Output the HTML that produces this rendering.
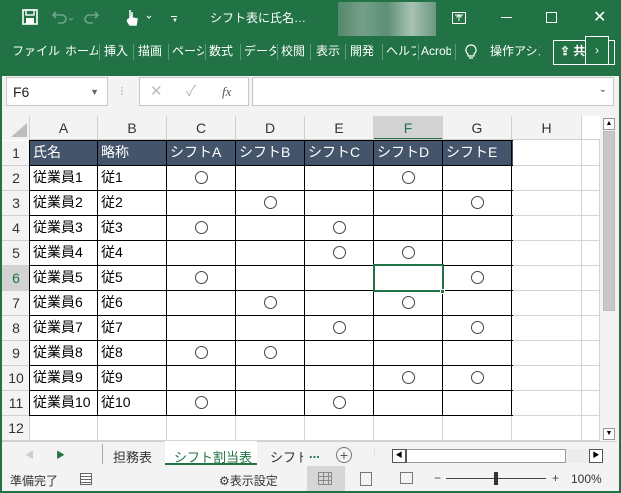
<!DOCTYPE html><html><head><meta charset="utf-8"><style>
*{margin:0;padding:0;box-sizing:border-box}
body{width:621px;height:493px;overflow:hidden;background:#217346;font-family:"Liberation Sans","Noto Sans CJK JP",sans-serif;position:relative}
.a{position:absolute}
.t{color:#fff;font-size:12px}
.tab{position:absolute;top:38px;height:26px;line-height:26px;color:#fff;font-size:12px;white-space:nowrap;overflow:hidden}
.sep{position:absolute;top:44px;width:1px;height:16px;background:#5c9a78}
#main{position:absolute;left:2px;top:76px;width:617px;height:415px;background:#f3f3f3}
.cell{position:absolute;font-size:14px;line-height:25px;color:#000;padding-left:3px;white-space:nowrap}
.ch{position:absolute;top:116px;height:24px;line-height:24px;text-align:center;font-size:14px;color:#333;border-right:1px solid #d0d0d0;background:#f3f3f3}
.rh{position:absolute;left:2px;width:28px;height:25px;line-height:25px;text-align:center;font-size:14px;color:#333;border-bottom:1px solid #d0d0d0}
.o{position:absolute;width:13px;height:13px;border:1px solid #444;border-radius:50%}
</style></head><body>
<svg class="a" style="left:22px;top:9px" width="16" height="16"><rect x="1" y="1" width="14" height="14" fill="none" stroke="#fff" stroke-width="1.6"/><rect x="4" y="1" width="8" height="5" fill="none" stroke="#fff" stroke-width="1.4"/><rect x="4" y="9" width="8" height="6" fill="#fff"/></svg>
<svg class="a" style="left:50px;top:9px" width="60" height="16"><path d="M3 6h9a4 4 0 0 1 0 8H8M6 3L3 6l3 3" fill="none" stroke="#6fa58a" stroke-width="1.6"/><path d="M19 9l2 2 2-2" stroke="#6fa58a" fill="none"/><path d="M48 6h-9a4 4 0 0 0 0 8h4M45 3l3 3-3 3" fill="none" stroke="#6fa58a" stroke-width="1.6"/></svg>
<svg class="a" style="left:126px;top:8px" width="32" height="18"><path d="M4 2v9M4 11c-2 0-3 1-2 3l2 3h6l1-6-5-1V4" fill="#fff" stroke="#fff" stroke-width="1.5"/><path d="M21 8l2 2 2-2" stroke="#fff" fill="none"/></svg>
<div class="a" style="left:171px;top:16px;width:6px;height:1px;background:#fff"></div><div class="a" style="left:172px;top:18px;font-size:6px;color:#fff">▼</div>
<div class="a t" style="left:210px;top:9px;font-size:12px">シフト表に氏名…</div>
<div class="a" style="left:338px;top:2px;width:98px;height:34px;background:linear-gradient(90deg,#5f8f76,#8aa998,#6c9782,#c9d6cf,#7fa08f);opacity:.8"></div>
<svg class="a" style="left:452px;top:12px" width="14" height="12"><rect x=".5" y=".5" width="13" height="11" fill="none" stroke="#fff"/><path d="M7 9V3M4.5 5.5L7 3l2.5 2.5M3 3h8" stroke="#fff" fill="none"/></svg>
<div class="a" style="left:501px;top:17px;width:11px;height:1px;background:#fff"></div>
<div class="a" style="left:546px;top:12px;width:11px;height:11px;border:1px solid #fff"></div>
<div class="a t" style="left:593px;top:7px;font-size:16px">✕</div>
<div class="tab" style="left:12px">ファイル</div>
<div class="tab" style="left:65px;width:33px">ホーム</div><div class="sep" style="left:99px"></div>
<div class="tab" style="left:104px">挿入</div><div class="sep" style="left:133px"></div>
<div class="tab" style="left:138px">描画</div><div class="sep" style="left:168px"></div>
<div class="tab" style="left:172px;width:32px">ページ</div><div class="sep" style="left:205px"></div>
<div class="tab" style="left:209px">数式</div><div class="sep" style="left:240px"></div>
<div class="tab" style="left:244px;width:32px">データ</div><div class="sep" style="left:277px"></div>
<div class="tab" style="left:281px">校閲</div><div class="sep" style="left:310px"></div>
<div class="tab" style="left:316px">表示</div><div class="sep" style="left:345px"></div>
<div class="tab" style="left:350px">開発</div><div class="sep" style="left:382px"></div>
<div class="tab" style="left:386px;width:30px">ヘルプ</div><div class="sep" style="left:418px"></div>
<div class="tab" style="left:421px;width:30px">Acrobat</div><div class="sep" style="left:455px"></div>
<svg class="a" style="left:465px;top:44px" width="12" height="16"><path d="M6 1a5 5 0 0 0-3 9v2h6v-2a5 5 0 0 0-3-9zM4 14h4" fill="none" stroke="#fff" stroke-width="1.2"/></svg>
<div class="tab" style="left:490px;width:50px">操作アシスト</div>
<div class="a" style="left:553px;top:40px;width:62px;height:25px;border:1px solid #fff"></div>
<div class="tab" style="left:560px;font-weight:bold">⇪ 共</div>
<div class="a" style="left:585px;top:36px;width:24px;height:29px;border:1px solid #fff;background:#217346;color:#fff;text-align:center;line-height:27px;font-size:12px">›</div>
<div id="main"></div>
<div class="a" style="left:6px;top:77px;width:102px;height:29px;background:#fff;border:1px solid #c6c6c6;font-size:14px;line-height:28px;padding-left:6px;color:#222">F6<span style="position:absolute;right:8px;font-size:9px;color:#666">▼</span></div>
<div class="a" style="left:120px;top:84px;color:#aaa;font-size:12px">⁝</div>
<div class="a" style="left:139px;top:77px;width:110px;height:29px;background:#fff;border:1px solid #c6c6c6;color:#bbb;font-size:15px;line-height:27px"><span style="position:absolute;left:10px">✕</span><span style="position:absolute;left:46px">✓</span><span style="position:absolute;left:82px;color:#555;font-style:italic;font-family:'Liberation Serif',serif;font-size:13px">fx</span></div>
<div class="a" style="left:252px;top:77px;width:362px;height:29px;background:#fff;border:1px solid #c6c6c6"><span style="position:absolute;right:6px;top:6px;font-size:10px;color:#555">⌄</span></div>
<div class="a" style="left:2px;top:116px;width:598px;height:325px;background:#fff"></div>
<div class="a" style="left:2px;top:116px;width:28px;height:24px;background:#f3f3f3;border-right:1px solid #d0d0d0"></div>
<svg class="a" style="left:8px;top:122px" width="20" height="16"><path d="M19 1V15H3Z" fill="#bdbdbd"/></svg>
<div id="g"></div>
<div class="a" style="left:600px;top:116px;width:17px;height:325px;background:#f3f3f3"></div>
<div class="a" style="left:603px;top:118px;width:12px;height:12px;border:1px solid #999;background:#fff;font-size:7px;text-align:center;line-height:10px">▲</div>
<div class="a" style="left:603px;top:131px;width:12px;height:180px;background:#c8c8c8;border:1px solid #bbb"></div>
<div class="a" style="left:603px;top:428px;width:12px;height:12px;border:1px solid #999;background:#fff;font-size:7px;text-align:center;line-height:10px">▼</div>
<div class="a" style="left:2px;top:441px;width:615px;height:24px;background:#f3f3f3;border-top:1px solid #d0d0d0"></div>
<div class="a" style="left:25px;top:448px;font-size:9px;color:#ccc">◀</div>
<div class="a" style="left:56px;top:448px;font-size:9px;color:#217346">▶</div>
<div class="a" style="left:102px;top:444px;width:1px;height:20px;background:#aaa"></div>
<div class="a" style="left:113px;top:447px;font-size:13px;color:#333">担務表</div>
<div class="a" style="left:165px;top:441px;width:92px;height:24px;background:#fff;border-bottom:2px solid #217346"></div>
<div class="a" style="left:174px;top:447px;font-size:13px;color:#217346">シフト割当表</div>
<div class="a" style="left:270px;top:447px;font-size:13px;color:#333;width:33px;overflow:hidden;white-space:nowrap">シフト時間</div>
<div class="a" style="left:309px;top:446px;font-size:13px;color:#217346;font-weight:bold">...</div>
<div class="a" style="left:336px;top:447px;width:16px;height:16px;border:1px solid #777;border-radius:50%;text-align:center;line-height:14px;font-size:14px;color:#555">+</div>
<div class="a" style="left:373px;top:448px;font-size:10px;color:#ccc">⁝</div>
<div class="a" style="left:392px;top:449px;width:211px;height:14px;background:#fff;border:1px solid #999"></div>
<div class="a" style="left:392px;top:449px;width:14px;height:14px;border:1px solid #555;font-size:7px;line-height:12px;text-align:center">◀</div>
<div class="a" style="left:589px;top:449px;width:14px;height:14px;border:1px solid #555;font-size:7px;line-height:12px;text-align:center">▶</div>
<div class="a" style="left:406px;top:449px;width:1px;height:14px;background:#555"></div>
<div class="a" style="left:565px;top:449px;width:24px;height:14px;background:#ececec;border-left:1px solid #999"></div>
<div class="a" style="left:2px;top:466px;width:615px;height:25px;background:#f3f3f3"></div>
<div class="a" style="left:10px;top:472px;font-size:12px;color:#333">準備完了</div>
<div class="a" style="left:80px;top:473px;width:12px;height:12px;border:1px solid #666;background:repeating-linear-gradient(#fff 0 2px,#666 2px 3px)"></div>
<div class="a" style="left:219px;top:472px;font-size:12px;color:#333">⚙表示設定</div>
<div class="a" style="left:307px;top:466px;width:38px;height:25px;background:#d6d6d6"></div>
<div class="a" style="left:318px;top:472px;width:14px;height:13px;border:1px solid #888;background:linear-gradient(90deg,transparent 4px,#888 4px 5px,transparent 5px 9px,#888 9px 10px,transparent 10px),linear-gradient(transparent 3px,#888 3px 4px,transparent 4px 7px,#888 7px 8px,transparent 8px)"></div>
<div class="a" style="left:360px;top:472px;width:12px;height:14px;border:1px solid #777"></div>
<div class="a" style="left:400px;top:472px;width:13px;height:12px;border:1px solid #777"></div>
<div class="a" style="left:434px;top:471px;font-size:12px;color:#444">−</div>
<div class="a" style="left:446px;top:478px;width:100px;height:1px;background:#444"></div>
<div class="a" style="left:494px;top:472px;width:4px;height:13px;background:#333"></div>
<div class="a" style="left:552px;top:471px;font-size:12px;color:#444">+</div>
<div class="a" style="left:571px;top:472px;font-size:12px;color:#333">100%</div>
<script>
var cols=[30,98,167,236,305,374,443,512,582,600],L="ABCDEFGH",h="";
for(var i=0;i<8;i++){h+='<div class="ch" style="left:'+cols[i]+'px;width:'+(cols[i+1]-cols[i])+'px;'+(i==5?'background:#d2d2d2;color:#217346;border-bottom:2px solid #217346':'')+'">'+L[i]+'</div>';}
h+='<div class="a" style="left:30px;top:139px;width:570px;height:1px;background:#d0d0d0"></div>';
for(var i=1;i<=9;i++)h+='<div class="a" style="left:'+(cols[i]-1)+'px;top:140px;width:1px;height:301px;background:#d4d4d4"></div>';
for(var r=1;r<=12;r++){var t=141+(r-1)*25;h+='<div class="rh" style="top:'+t+'px;'+(r==6?'background:#d2d2d2;color:#217346':'background:#f3f3f3')+'">'+r+'</div>';h+='<div class="a" style="left:30px;top:'+(t+24)+'px;width:570px;height:1px;background:#d4d4d4"></div>';}
h+='<div class="a" style="left:29px;top:116px;width:1px;height:325px;background:#d0d0d0"></div>';
h+='<div class="a" style="left:30px;top:141px;width:483px;height:24px;background:#44546a"></div>';
var hd=["氏名","略称","シフトA","シフトB","シフトC","シフトD","シフトE"];
for(var i=0;i<7;i++)h+='<div class="cell" style="left:'+cols[i]+'px;top:140px;color:#fff">'+hd[i]+'</div>';
var pat=[[2,5],[3,6],[2,4],[4,5],[2,6],[3,5],[4,6],[2,3],[5,6],[2,4]];
for(var r=2;r<=11;r++){var t=141+(r-1)*25;h+='<div class="cell" style="left:30px;top:'+(t-1)+'px">従業員'+(r-1)+'</div><div class="cell" style="left:98px;top:'+(t-1)+'px">従'+(r-1)+'</div>';
pat[r-2].forEach(function(c){var cx=(cols[c]+cols[c+1])/2;h+='<div class="o" style="left:'+(cx-7)+'px;top:'+(t+5)+'px"></div>';});}
for(var r=0;r<=11;r++)h+='<div class="a" style="left:30px;top:'+(140+r*25)+'px;width:483px;height:1px;background:#000"></div>';
for(var i=0;i<=7;i++)h+='<div class="a" style="left:'+(cols[i]-1)+'px;top:140px;width:1px;height:276px;background:#000"></div>';
h+='<div class="a" style="left:373px;top:264px;width:71px;height:28px;border:2px solid #217346"></div><div class="a" style="left:440px;top:289px;width:5px;height:5px;background:#217346;border:1px solid #fff"></div>';
document.getElementById('g').innerHTML=h;
</script>
</body></html>
